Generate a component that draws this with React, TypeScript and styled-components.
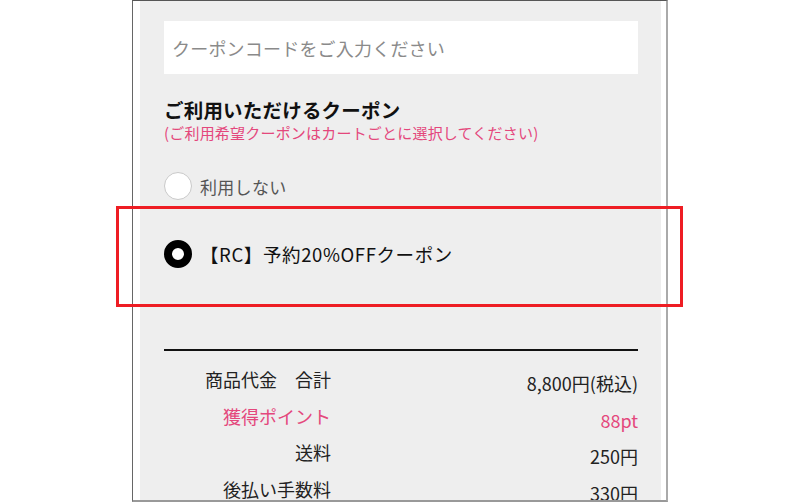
import React from "react";
import styled, { createGlobalStyle } from "styled-components";

const GlobalStyle = createGlobalStyle`
  html, body {
    margin: 0;
    padding: 0;
    background: #ffffff;
  }
  body {
    font-family: "Noto Sans CJK JP", "Noto Sans", sans-serif;
    color: #222;
  }
`;

const Page = styled.div`
  position: relative;
  width: 800px;
  height: 502px;
  overflow: hidden;
  display: flex;
  justify-content: center;
`;

const Frame = styled.div`
  box-sizing: border-box;
  width: 536px;
  height: 502px;
  border-top: 1px solid #555;
  border-left: 1px solid #666;
  border-right: 2px solid #aaa;
  border-bottom: 2px solid #999;
  padding: 0 5px 0 7px;
  background: #ffffff;
  overflow: hidden;
`;

const Panel = styled.div`
  height: 100%;
  background: #eeeeee;
  padding: 20px 23px 0 24px;
  display: flex;
  flex-direction: column;
`;

const CodeInput = styled.input`
  box-sizing: border-box;
  width: 100%;
  height: 53px;
  border: none;
  outline: none;
  background: #ffffff;
  padding: 0 8px;
  font-family: inherit;
  font-size: 18px;
  letter-spacing: 0.2px;
  color: #333;
  &::placeholder {
    color: #8a8a8a;
  }
`;

const Heading = styled.h2`
  margin: 23px 0 0;
  font-size: 19.5px;
  line-height: 26px;
  font-weight: 700;
  letter-spacing: 0.2px;
  color: #111;
`;

const Note = styled.p`
  margin: 0;
  font-size: 15px;
  line-height: 20px;
  letter-spacing: 0.2px;
  color: #e4477c;
`;

const Options = styled.div`
  margin-top: 9px;
  display: flex;
  flex-direction: column;
`;

const Option = styled.label`
  height: 68px;
  display: flex;
  align-items: center;
  gap: 8px;
`;

const Radio = styled.span<{ $checked?: boolean }>`
  box-sizing: border-box;
  flex: none;
  width: 28px;
  height: 28px;
  border-radius: 50%;
  background: #ffffff;
  border: ${(p) => (p.$checked ? "8px solid #000" : "1.5px solid #c9c9c9")};
`;

const OptionText = styled.span<{ $checked?: boolean }>`
  font-size: ${(p) => (p.$checked ? "18.5px" : "17px")};
  letter-spacing: ${(p) => (p.$checked ? "0.6px" : "0.3px")};
  color: ${(p) => (p.$checked ? "#111" : "#555")};
`;

const Divider = styled.hr`
  margin: 61px 0 0;
  border: none;
  border-top: 2px solid #111;
`;

const Summary = styled.div`
  margin-top: 13px;
  display: grid;
  grid-template-columns: 167px 1fr;
  grid-auto-rows: 36.5px;
`;

const Label = styled.div<{ $pink?: boolean }>`
  text-align: right;
  font-size: 18px;
  line-height: 30px;
  color: ${(p) => (p.$pink ? "#e4477c" : "#222")};
  white-space: pre;
`;

const Value = styled.div<{ $pink?: boolean }>`
  text-align: right;
  font-size: 18px;
  line-height: 30px;
  padding-top: 4px;
  color: ${(p) => (p.$pink ? "#e4477c" : "#222")};
`;

const Highlight = styled.div`
  position: absolute;
  left: 116px;
  top: 206px;
  width: 567px;
  height: 101px;
  box-sizing: border-box;
  border: 3px solid #ee1d23;
  pointer-events: none;
`;

const rows = [
  { label: "商品代金　合計", value: "8,800円(税込)" },
  { label: "獲得ポイント", value: "88pt", pink: true },
  { label: "送料", value: "250円" },
  { label: "後払い手数料", value: "330円" },
];

export default function App() {
  return (
    <Page>
      <GlobalStyle />
      <Frame>
        <Panel>
          <CodeInput placeholder="クーポンコードをご入力ください" />
          <Heading>ご利用いただけるクーポン</Heading>
          <Note>(ご利用希望クーポンはカートごとに選択してください)</Note>
          <Options>
            <Option>
              <Radio />
              <OptionText>利用しない</OptionText>
            </Option>
            <Option>
              <Radio $checked />
              <OptionText $checked>【RC】予約20%OFFクーポン</OptionText>
            </Option>
          </Options>
          <Divider />
          <Summary>
            {rows.map((r) => (
              <React.Fragment key={r.label}>
                <Label $pink={r.pink}>{r.label}</Label>
                <Value $pink={r.pink}>{r.value}</Value>
              </React.Fragment>
            ))}
          </Summary>
        </Panel>
      </Frame>
      <Highlight />
    </Page>
  );
}
